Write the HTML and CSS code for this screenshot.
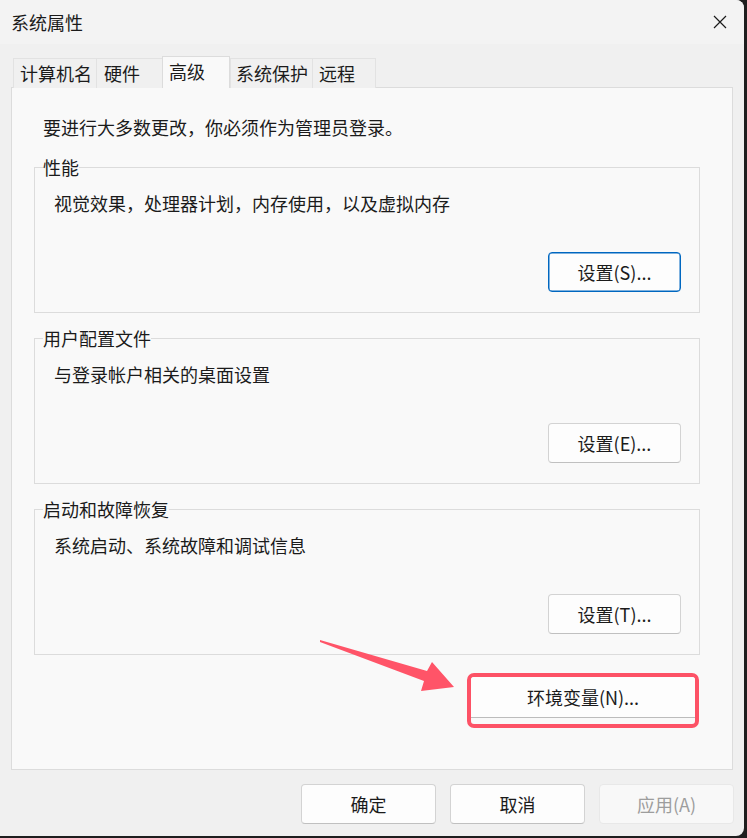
FILE: index.html
```html
<!DOCTYPE html>
<html lang="zh-CN">
<head>
<meta charset="utf-8">
<title>系统属性</title>
<link rel="stylesheet" href="styles.css">
</head>
<body>
<div class="window">
  <div class="titlebar">
    <span class="title">系统属性</span>
    <span class="close">
      <svg width="14" height="14" viewBox="0 0 14 14"><path d="M1 1 L13 13 M13 1 L1 13" stroke="#1a1a1a" stroke-width="1.2" fill="none"/></svg>
    </span>
  </div>
  <div class="body">
    <div class="tabs">
      <div class="tab w1">计算机名</div>
      <div class="tab w2">硬件</div>
      <div class="tab active w3">高级</div>
      <div class="tab w4">系统保护</div>
      <div class="tab w5">远程</div>
    </div>
    <div class="panel">
      <div class="intro">要进行大多数更改，你必须作为管理员登录。</div>
      <fieldset class="group first">
        <legend>性能</legend>
        <div class="desc">视觉效果，处理器计划，内存使用，以及虚拟内存</div>
        <button class="btn set focused">设置(S)...</button>
      </fieldset>
      <fieldset class="group">
        <legend>用户配置文件</legend>
        <div class="desc">与登录帐户相关的桌面设置</div>
        <button class="btn set">设置(E)...</button>
      </fieldset>
      <fieldset class="group">
        <legend>启动和故障恢复</legend>
        <div class="desc">系统启动、系统故障和调试信息</div>
        <button class="btn set">设置(T)...</button>
      </fieldset>
      <div class="highlight">
        <button class="env">环境变量(N)...</button>
      </div>
    </div>
    <div class="footer">
      <button class="btn foot">确定</button>
      <button class="btn foot">取消</button>
      <button class="btn foot disabled">应用(A)</button>
    </div>
  </div>
  <svg class="arrow" width="744" height="836" viewBox="0 0 744 836">
    <polygon points="320,640 427,671 432,662 454,687 421,691 424,681 320,642" fill="#ff5468"/>
  </svg>
</div>
</body>
</html>
```

FILE: styles.css
```css
html, body {
  margin: 0;
  padding: 0;
}
body {
  background: #1e1e1e;
  width: 747px;
  height: 838px;
  overflow: hidden;
  font-family: "Noto Sans CJK SC", "Noto Sans", sans-serif;
  font-size: 18px;
  color: #1b1b1b;
}
.window {
  position: relative;
  width: 744px;
  height: 836px;
  background: #f0f0f0;
  border-radius: 0 8px 8px 0;
  overflow: hidden;
}
.titlebar {
  height: 44px;
  background: #f3f3f3;
  display: flex;
  align-items: center;
  justify-content: space-between;
  padding-left: 11px;
}
.title {
  line-height: 24px;
  color: #1a1a1a;
}
.close {
  width: 48px;
  height: 44px;
  display: flex;
  align-items: center;
  justify-content: center;
}
.body {
  padding: 12px 11px 0 11px;
}
.tabs {
  display: flex;
  align-items: flex-end;
  height: 32px;
  padding-left: 2px;
  margin-bottom: -1px;
}
.tab {
  box-sizing: border-box;
  height: 30px;
  border: 1px solid #e2e2e2;
  border-bottom: none;
  border-right: none;
  padding-left: 6px;
  line-height: 28px;
  background: #f0f0f0;
}
.tab.w1 { width: 83px; }
.tab.w2 { width: 66px; padding-left: 7px; }
.tab.w3 { width: 68px; }
.tab.w4 { width: 82px; padding-left: 5px; }
.tab.w5 { width: 64px; border-right: 1px solid #e2e2e2; }
.tab.active {
  position: relative;
  z-index: 1;
  height: 32px;
  background: #f9f9f9;
  border: 1px solid #dcdcdc;
  border-bottom: none;
  line-height: 28px;
}
.panel {
  box-sizing: border-box;
  height: 683px;
  border: 1px solid #dcdcdc;
  background: #f9f9f9;
  padding: 27px 32px 0 22px;
  display: flex;
  flex-direction: column;
}
.intro {
  line-height: 24px;
  margin-left: 9px;
}
.group {
  margin: 13px 0 0 0;
  border: 1px solid #dcdcdc;
  padding: 12px 18px 20px 8px;
  display: flex;
  flex-direction: column;
  min-width: 0;
}
.group.first {
  margin-top: 16px;
}
.group legend {
  padding: 0;
  line-height: 24px;
}
.desc {
  margin-left: 11px;
  line-height: 24px;
}
.btn {
  box-sizing: border-box;
  font-family: inherit;
  font-size: 18px;
  color: #1b1b1b;
  background: #fdfdfd;
  border: 1px solid #d3d3d3;
  border-bottom-color: #c0c0c0;
  border-radius: 4px;
  height: 40px;
  padding: 0;
  line-height: 24px;
}
.btn.set {
  align-self: flex-end;
  width: 133px;
  margin-top: 37px;
}
.btn.focused {
  border: 1px solid #0067c0;
  box-shadow: inset 0 0 0 0.5px #0067c0;
}
.highlight {
  align-self: flex-end;
  box-sizing: border-box;
  width: 232px;
  height: 55px;
  margin-top: 18px;
  margin-right: 1px;
  border: 4px solid #fd5266;
  border-radius: 7px;
  overflow: hidden;
}
.env {
  display: block;
  width: 100%;
  height: 41px;
  border: none;
  border-bottom: 1px solid #bcbcbc;
  background: #fdfdfd;
  font-family: inherit;
  font-size: 18px;
  color: #1b1b1b;
  padding: 0;
}
.footer {
  display: flex;
  justify-content: flex-end;
  gap: 14px;
  padding-top: 14px;
  margin-right: -1px;
}
.btn.foot {
  width: 135px;
}
.btn.disabled {
  color: #9d9d9d;
  background: #f8f8f8;
  border-color: #e8e8e8;
}
.arrow {
  position: absolute;
  left: 0;
  top: 0;
  pointer-events: none;
}
```
